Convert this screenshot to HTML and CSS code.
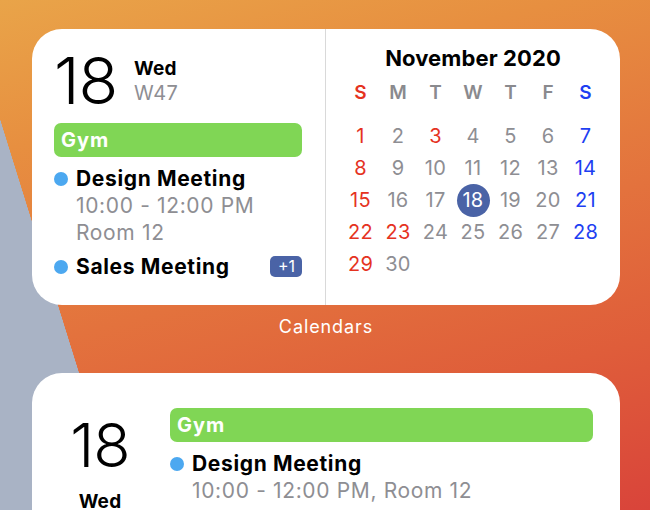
FILE: index.html
```html
<!DOCTYPE html>
<html lang="en">
<head>
<meta charset="utf-8">
<title>Calendar widgets</title>
<link rel="stylesheet" href="styles.css">
</head>
<body>
<main class="screen">
  <section class="widget widget-medium">
    <div class="agenda">
      <div class="date-head">
        <span class="day-num">18</span>
        <div class="day-meta">
          <span class="dow">Wed</span>
          <span class="week">W47</span>
        </div>
      </div>
      <div class="allday">Gym</div>
      <div class="event">
        <div class="event-title"><span class="dot"></span><span class="title-text">Design Meeting</span></div>
        <div class="event-detail">10:00 - 12:00 PM</div>
        <div class="event-detail">Room 12</div>
      </div>
      <div class="event event-last">
        <div class="event-title"><span class="dot"></span><span class="title-text">Sales Meeting</span><span class="more">+1</span></div>
      </div>
    </div>
    <div class="month">
      <h2 class="month-title">November 2020</h2>
      <div class="cal-grid">
        <span class="wd sun">S</span><span class="wd">M</span><span class="wd">T</span><span class="wd">W</span><span class="wd">T</span><span class="wd">F</span><span class="wd sat">S</span>
        <span class="d sun">1</span><span class="d">2</span><span class="d sun">3</span><span class="d">4</span><span class="d">5</span><span class="d">6</span><span class="d sat">7</span>
        <span class="d sun">8</span><span class="d">9</span><span class="d">10</span><span class="d">11</span><span class="d">12</span><span class="d">13</span><span class="d sat">14</span>
        <span class="d sun">15</span><span class="d">16</span><span class="d">17</span><span class="d today"><span class="today-mark">18</span></span><span class="d">19</span><span class="d">20</span><span class="d sat">21</span>
        <span class="d sun">22</span><span class="d sun">23</span><span class="d">24</span><span class="d">25</span><span class="d">26</span><span class="d">27</span><span class="d sat">28</span>
        <span class="d sun">29</span><span class="d">30</span>
      </div>
    </div>
  </section>
  <p class="widget-label">Calendars</p>
  <section class="widget widget-large">
    <div class="big-date">
      <span class="big-num">18</span>
      <span class="big-dow">Wed</span>
    </div>
    <div class="big-events">
      <div class="allday">Gym</div>
      <div class="event">
        <div class="event-title"><span class="dot"></span><span class="title-text">Design Meeting</span></div>
        <div class="event-detail">10:00 - 12:00 PM, Room 12</div>
      </div>
    </div>
  </section>
</main>
</body>
</html>
```

FILE: styles.css
```css
* { box-sizing: border-box; }

html, body {
  margin: 0;
  padding: 0;
  width: 650px;
  height: 510px;
  overflow: hidden;
}

body {
  font-family: Inter, Roboto, "Liberation Sans", sans-serif;
  background:
    linear-gradient(72.7deg, #a9b3c5 116px, rgba(169,179,197,0) 116.5px),
    linear-gradient(165deg, #e9a449 0%, #e78f40 22%, #e3723d 52%, #df5d3a 75%, #d9443a 100%);
}

.screen {
  padding: 29px 30px 0 32px;
  display: flex;
  flex-direction: column;
  width: 650px;
}

.widget {
  width: 588px;
  background: #fff;
  border-radius: 30px;
  display: flex;
  overflow: hidden;
}

.widget-medium { height: 276px; }

.agenda {
  width: 294px;
  padding: 20px 23px 0 22px;
  border-right: 1px solid #d9d9d9;
  display: flex;
  flex-direction: column;
}

.date-head {
  display: flex;
  align-items: flex-start;
  height: 64px;
}

.day-num {
  font-size: 65px;
  font-weight: 300;
  line-height: 64px;
  letter-spacing: -1px;
  color: #000;
  width: 80px;
}

.day-meta {
  display: flex;
  flex-direction: column;
  padding-top: 8px;
}

.dow {
  font-size: 19px;
  font-weight: 700;
  line-height: 24px;
  letter-spacing: 0.2px;
  color: #000;
}

.week {
  font-size: 20px;
  font-weight: 400;
  line-height: 24px;
  letter-spacing: 0.3px;
  color: #8e8e93;
}

.allday {
  margin-top: 10px;
  height: 34px;
  border-radius: 7px;
  background: #80d655;
  color: #fff;
  font-size: 20px;
  font-weight: 700;
  line-height: 34px;
  letter-spacing: 1px;
  padding-left: 7px;
}

.event { margin-top: 8px; }
.event-last { margin-top: 7px; }

.event-title {
  display: flex;
  align-items: center;
  height: 27px;
}

.dot {
  width: 14px;
  height: 14px;
  border-radius: 50%;
  background: #4ca8f0;
  margin-right: 8px;
  flex: none;
}

.title-text {
  font-size: 21px;
  font-weight: 700;
  line-height: 27px;
  letter-spacing: 0.65px;
  color: #000;
  flex: 1;
}

.event-detail {
  font-size: 21px;
  line-height: 27px;
  letter-spacing: 0.65px;
  color: #8e8e93;
  padding-left: 22px;
}

.more {
  background: #4a63a6;
  color: #fff;
  font-size: 16px;
  line-height: 21px;
  height: 21px;
  padding: 0 7px 0 8px;
  border-radius: 5px;
}

.month {
  flex: 1;
  padding-top: 15px;
  display: flex;
  flex-direction: column;
  align-items: center;
}

.month-title {
  margin: 0;
  font-size: 22px;
  font-weight: 700;
  line-height: 28px;
  letter-spacing: 0.1px;
  color: #000;
}

.cal-grid {
  margin-top: 5px;
  display: grid;
  grid-template-columns: repeat(7, 37.5px);
  grid-template-rows: 43px repeat(5, 32px);
  justify-items: center;
  align-items: center;
}

.wd {
  font-size: 19px;
  font-weight: 600;
  color: #8a8a8e;
  align-self: start;
  line-height: 32px;
}

.d {
  font-size: 20px;
  line-height: 32px;
  letter-spacing: 0.3px;
  color: #8e8e93;
}

.sun { color: #e5331f; }
.sat { color: #1e3ff2; }

.today-mark {
  display: flex;
  align-items: center;
  justify-content: center;
  width: 33px;
  height: 33px;
  border-radius: 50%;
  background: #4a63a6;
  color: #fff;
}

.widget-label {
  margin: 10px 0 0;
  width: 588px;
  text-align: center;
  color: #fff;
  font-size: 18px;
  font-weight: 400;
  line-height: 24px;
  letter-spacing: 0.9px;
}

.widget-large {
  margin-top: 34px;
  height: 200px;
  padding: 35px 27px 0 0;
}

.big-date {
  width: 136px;
  display: flex;
  flex-direction: column;
  align-items: center;
  padding-top: 7px;
  margin-right: 2px;
}

.big-num {
  font-size: 61px;
  font-weight: 300;
  line-height: 61px;
  letter-spacing: -1px;
  color: #000;
}

.big-dow {
  margin-top: 14px;
  font-size: 19px;
  font-weight: 700;
  line-height: 24px;
  letter-spacing: 0.2px;
  color: #000;
}

.big-events {
  flex: 1;
}

.big-events .allday { margin-top: 0; }
.big-events .event { margin-top: 8px; }
```
